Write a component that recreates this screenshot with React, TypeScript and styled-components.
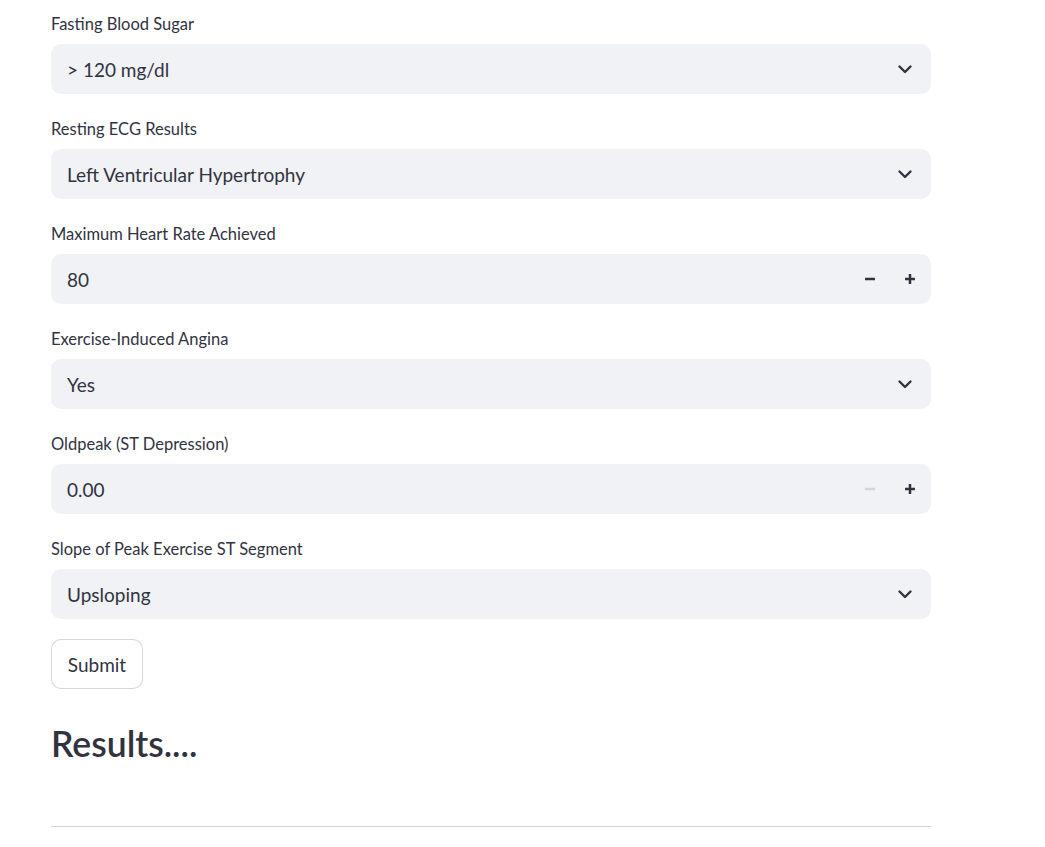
import React from "react";
import styled, { createGlobalStyle } from "styled-components";

const Global = createGlobalStyle`
  html, body { margin: 0; padding: 0; background: #ffffff; }
  body { font-family: "Source Sans Pro", Lato, "Liberation Sans", sans-serif; color: #31333f; }
`;

const Page = styled.div`
  width: 880px;
  padding: 10px 0 0 51px;
  display: flex;
  flex-direction: column;
`;

const Field = styled.div`
  display: flex;
  flex-direction: column;
  gap: 6px;
  margin-bottom: 21px;
`;

const Label = styled.label`
  font-size: 16.5px;
  line-height: 28px;
  height: 28px;
  color: #31333f;
`;

const Box = styled.div`
  height: 50px;
  border-radius: 10px;
  background: #f0f2f6;
  display: flex;
  align-items: center;
  padding: 0 0 0 16px;
  box-sizing: border-box;
`;

const Value = styled.span`
  flex: 1;
  font-size: 19px;
  color: #31333f;
`;

const Chevron = styled.svg`
  width: 16px;
  height: 16px;
  margin-right: 18px;
`;

const StepBtn = styled.button<{ $disabled?: boolean }>`
  width: 40px;
  height: 50px;
  border: none;
  background: transparent;
  display: flex;
  align-items: center;
  justify-content: center;
  padding: 0;
  color: ${(p) => (p.$disabled ? "#d3d5db" : "#31333f")};
`;

const Steps = styled.div`
  display: flex;
  margin-right: 1px;
`;

const SubmitButton = styled.button`
  align-self: flex-start;
  margin-top: -1px;
  height: 50px;
  width: 92px;
  border: 1px solid rgba(49, 51, 63, 0.2);
  border-radius: 10px;
  background: #ffffff;
  font-family: inherit;
  font-size: 19px;
  color: #31333f;
  padding: 0;
`;

const Heading = styled.h3`
  margin: 32px 0 0;
  font-size: 35.5px;
  font-weight: 600;
  line-height: 46px;
  color: #31333f;
`;

const Divider = styled.hr`
  margin: 59px 0 0;
  border: none;
  border-top: 1px solid #d5d6d9;
  width: 880px;
`;

const ChevronIcon = () => (
  <Chevron viewBox="0 0 16 16">
    <path d="M2.5 5.5 L8 11 L13.5 5.5" fill="none" stroke="#31333f" strokeWidth="2.4" strokeLinecap="round" strokeLinejoin="round" />
  </Chevron>
);

const Minus = () => (
  <svg width="12" height="12" viewBox="0 0 12 12">
    <rect x="1" y="4.75" width="10" height="2.5" fill="currentColor" />
  </svg>
);
const Plus = () => (
  <svg width="12" height="12" viewBox="0 0 12 12">
    <rect x="1" y="4.75" width="10" height="2.5" fill="currentColor" />
    <rect x="4.75" y="1" width="2.5" height="10" fill="currentColor" />
  </svg>
);

const Select = ({ label, value }: { label: string; value: string }) => (
  <Field>
    <Label>{label}</Label>
    <Box>
      <Value>{value}</Value>
      <ChevronIcon />
    </Box>
  </Field>
);

const NumberInput = ({ label, value, minDisabled }: { label: string; value: string; minDisabled?: boolean }) => (
  <Field>
    <Label>{label}</Label>
    <Box>
      <Value>{value}</Value>
      <Steps>
        <StepBtn $disabled={minDisabled}><Minus /></StepBtn>
        <StepBtn><Plus /></StepBtn>
      </Steps>
    </Box>
  </Field>
);

export default function App() {
  return (
    <>
      <Global />
      <Page>
        <Select label="Fasting Blood Sugar" value="> 120 mg/dl" />
        <Select label="Resting ECG Results" value="Left Ventricular Hypertrophy" />
        <NumberInput label="Maximum Heart Rate Achieved" value="80" />
        <Select label="Exercise-Induced Angina" value="Yes" />
        <NumberInput label="Oldpeak (ST Depression)" value="0.00" minDisabled />
        <Select label="Slope of Peak Exercise ST Segment" value="Upsloping" />
        <SubmitButton>Submit</SubmitButton>
        <Heading>Results....</Heading>
        <Divider />
      </Page>
    </>
  );
}
